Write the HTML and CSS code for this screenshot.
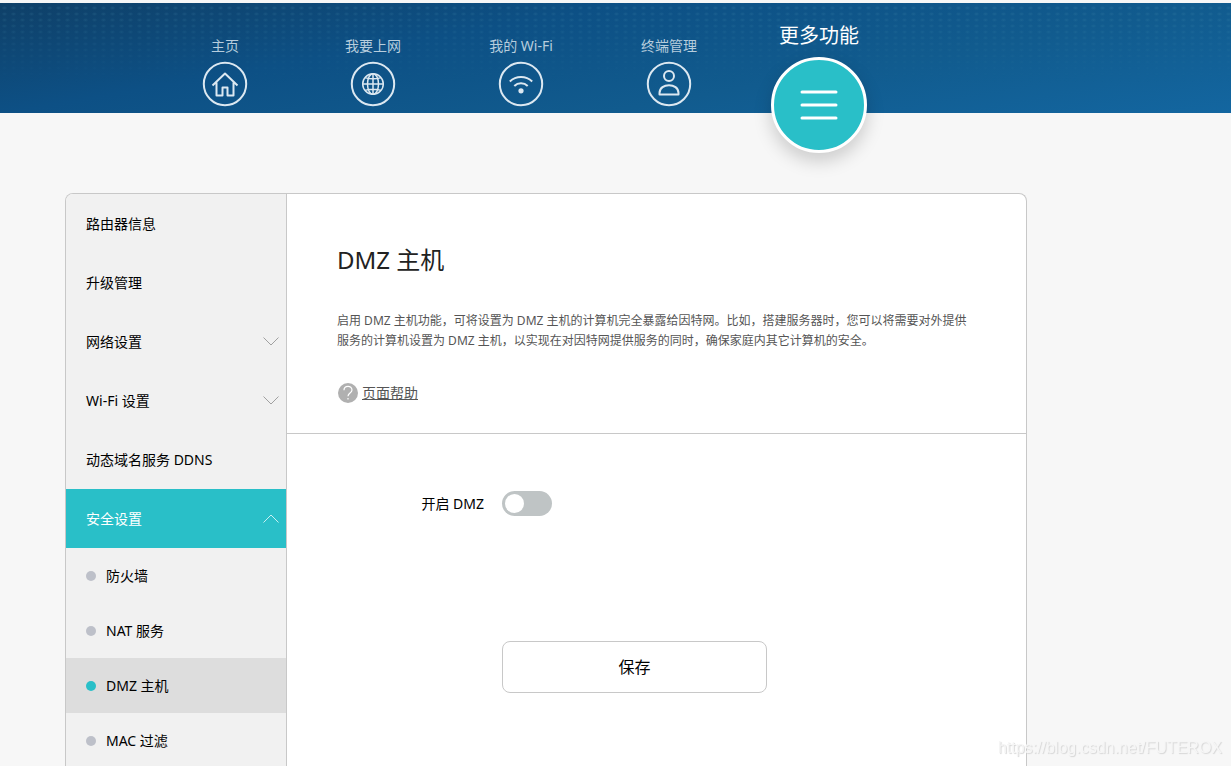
FILE: index.html
```html
<!DOCTYPE html>
<html lang="zh-CN">
<head>
<meta charset="utf-8">
<meta name="viewport" content="width=device-width, initial-scale=1">
<title>DMZ 主机</title>
<link rel="stylesheet" href="styles.css">
</head>
<body>
<header class="header">
  <nav class="nav">
    <a class="nav-item" href="#"><span class="nav-label">主页</span>
      <svg class="nav-icon" viewBox="0 0 44 44"><circle cx="22" cy="22" r="21.200"/><path d="M9.500 23.500 22 11.500 34.500 23.500M13.500 20.500V33.500H19.500V25.500H24.500V33.500H30.500V20.500"/></svg></a>
    <a class="nav-item" href="#"><span class="nav-label">我要上网</span>
      <svg class="nav-icon" viewBox="0 0 44 44"><circle cx="22" cy="22" r="21.200"/><g class="thin"><circle cx="22" cy="22" r="10.300"/><ellipse cx="22" cy="22" rx="5.500" ry="10.300"/><path d="M22 11.700V32.300M11.700 22H32.300M14 15.600Q22 18 30 15.600M14 28.400Q22 26 30 28.400"/></g></svg></a>
    <a class="nav-item" href="#"><span class="nav-label">我的 Wi-Fi</span>
      <svg class="nav-icon" viewBox="0 0 44 44"><circle cx="22" cy="22" r="21.200"/><path d="M10.800 19.500C17 13.600 27 13.600 33.200 19.500M15.300 24C19 20.300 25 20.300 28.700 24"/><circle class="dot-fill" cx="22" cy="28.800" r="2.600"/></svg></a>
    <a class="nav-item" href="#"><span class="nav-label">终端管理</span>
      <svg class="nav-icon" viewBox="0 0 44 44"><circle cx="22" cy="22" r="21.200"/><circle cx="22" cy="14" r="5"/><path d="M12.500 32.500V31C12.500 20.500 31.500 20.500 31.500 31V32.500Z"/></svg></a>
    <a class="nav-item nav-item-active" href="#"><span class="nav-label">更多功能</span>
      <span class="menu-circle"><svg class="menu-icon" viewBox="0 0 38 32"><path d="M2 3H36M2 16H36M2 29H36"/></svg></span></a>
  </nav>
</header>

<main class="panel">
  <aside class="sidebar">
    <a class="side-item" href="#">路由器信息</a>
    <a class="side-item" href="#">升级管理</a>
    <a class="side-item" href="#">网络设置<svg class="chevron" viewBox="0 0 16 9"><path d="M.5.5 8 8 15.500.5"/></svg></a>
    <a class="side-item" href="#">Wi-Fi 设置<svg class="chevron" viewBox="0 0 16 9"><path d="M.5.5 8 8 15.500.5"/></svg></a>
    <a class="side-item" href="#">动态域名服务 DDNS</a>
    <a class="side-item side-item-open" href="#">安全设置<svg class="chevron" viewBox="0 0 16 9"><path d="M.5 8.500 8 1 15.500 8.500"/></svg></a>
    <a class="sub-item" href="#">防火墙</a>
    <a class="sub-item" href="#">NAT 服务</a>
    <a class="sub-item sub-item-current" href="#">DMZ 主机</a>
    <a class="sub-item" href="#">MAC 过滤</a>
  </aside>
  <div class="content">
    <section class="intro">
      <h1 class="title">DMZ 主机</h1>
      <p class="desc">启用 DMZ 主机功能，可将设置为 DMZ 主机的计算机完全暴露给因特网。比如，搭建服务器时，您可以将需要对外提供服务的计算机设置为 DMZ 主机，以实现在对因特网提供服务的同时，确保家庭内其它计算机的安全。</p>
      <div class="help">
        <svg class="help-icon" viewBox="0 0 20 20"><circle cx="10" cy="10" r="10"/><path d="M6 7.300C6 2.200 14 2.200 14 7C14 10 10 10 10 13.200M10 15V16.500"/></svg>
        <a class="help-link" href="#">页面帮助</a>
      </div>
    </section>
    <form class="form">
      <label class="form-label" for="dmz">开启 DMZ</label>
      <input class="toggle" type="checkbox" id="dmz">
      <button class="save" type="button">保存</button>
    </form>
  </div>
</main>
<div class="watermark">https://blog.csdn.net/FUTEROX</div>
</body>
</html>
```
FILE: styles.css
```css
* { box-sizing: border-box; }

body {
  display: flex;
  flex-direction: column;
  height: 100vh;
  margin: 0;
  padding-top: 3px;
  overflow: hidden;
  background: #f7f7f7;
  color: #000;
  font: 14px/20px "Noto Sans", "Noto Sans CJK SC", sans-serif;
  font-variant-ligatures: none;
}

a { color: inherit; text-decoration: none; }

.header {
  position: relative;
  flex: none;
  height: 110px;
  background: linear-gradient(170deg, #0f4068 0%, #0d5085 34%, #115b8e 66%, #1366a0 100%);
}

/* dotted texture that fades towards the bottom edge */
.header::before {
  content: "";
  position: absolute;
  inset: 0;
  background: radial-gradient(ellipse 3px 2px, rgba(90, 165, 190, 0.2), transparent) 0 2px / 9px 6px;
  mask-image: linear-gradient(#000, transparent 75%);
}

.nav {
  position: relative;
  display: flex;
  align-items: flex-start;
  padding-left: 151px;
}

.nav-item {
  display: flex;
  flex-direction: column;
  align-items: center;
  gap: 6px;
  width: 148px;
  padding-top: 33px;
  color: #b7cddd;
}

.nav-icon {
  width: 44px;
  height: 44px;
  overflow: visible;
  fill: none;
  stroke: #dce8f1;
  stroke-width: 2;
  stroke-linejoin: round;
}

.nav-icon .thin { stroke-width: 1.500; }
.nav-icon .dot-fill { fill: #dce8f1; stroke: none; }

.nav-item-active {
  gap: 7px;
  width: 152px;
  padding-top: 19px;
  color: #fff;
  font-size: 20px;
  line-height: 28px;
}

.menu-circle {
  display: flex;
  align-items: center;
  justify-content: center;
  width: 96px;
  height: 96px;
  border: 3px solid #fff;
  border-radius: 50%;
  background: #29bfc8;
  box-shadow: 0 8px 18px rgba(0, 0, 0, 0.18);
}

.menu-icon {
  width: 38px;
  height: 32px;
  fill: none;
  stroke: #fff;
  stroke-width: 3;
  stroke-linecap: round;
}

.panel {
  display: flex;
  flex: 1 0 auto;
  margin: 80px 204px 0 65px;
  border: 1px solid #c8c8c8;
  border-bottom: 0;
  border-radius: 8px 8px 0 0;
  background: #fff;
  overflow: hidden;
}

.sidebar {
  flex: none;
  width: 221px;
  border-right: 1px solid #c8c8c8;
  background: #f1f1f1;
}

.side-item {
  display: flex;
  align-items: center;
  justify-content: space-between;
  height: 59px;
  padding: 0 7px 0 20px;
}

.side-item-open { background: #29bfc8; color: #fff; }

.chevron {
  width: 16px;
  height: 9px;
  fill: none;
  stroke: #a0a0a0;
}

.side-item-open .chevron { stroke: #c8f0f2; }

.sub-item {
  display: flex;
  align-items: center;
  gap: 10px;
  height: 55px;
  padding-left: 20px;
}

.sub-item::before {
  content: "";
  width: 10px;
  height: 10px;
  border-radius: 50%;
  background: #bdc0c9;
}

.sub-item-current { background: #ddd; }
.sub-item-current::before { background: #29bfc8; }

.content { flex: 1; }

.intro {
  padding: 50px 50px 30px;
  border-bottom: 1px solid #c8c8c8;
}

.title {
  margin: 0 0 35px;
  color: #222;
  font-size: 24px;
  font-weight: 400;
  line-height: 32px;
}

.desc {
  margin: 0 0 32px;
  color: #555;
  font-size: 12px;
  line-height: 20px;
}

.help { display: flex; align-items: center; gap: 4px; color: #555; }
.help-icon { width: 20px; height: 20px; margin-left: 1px; fill: #b0b0b0; }
.help-icon path { fill: none; stroke: #fff; stroke-width: 1.200; }
.help-link { text-decoration: underline; }

.form {
  display: grid;
  grid-template-columns: 197px 265px;
  column-gap: 18px;
  row-gap: 125px;
  align-items: center;
  padding-top: 57px;
}

.form-label { text-align: right; }

.toggle {
  display: flex;
  align-items: center;
  width: 50px;
  height: 25px;
  margin: 0;
  padding: 3px;
  appearance: none;
  border-radius: 13px;
  background: #bfc4c5;
}

.toggle::before {
  content: "";
  width: 19px;
  height: 19px;
  border-radius: 50%;
  background: #fff;
}

.toggle:checked { justify-content: flex-end; background: #29bfc8; }

.save {
  grid-column: 2;
  height: 52px;
  border: 1px solid #c8c8c8;
  border-radius: 8px;
  background: #fff;
  color: #000;
  font: inherit;
  font-size: 16px;
}

.watermark {
  position: fixed;
  right: 9px;
  bottom: 8px;
  color: #f6f6f6;
  font: 16px/20px "Liberation Sans", sans-serif;
  text-shadow: 1px 1px 1px #d6d6d6;
  pointer-events: none;
}
```
